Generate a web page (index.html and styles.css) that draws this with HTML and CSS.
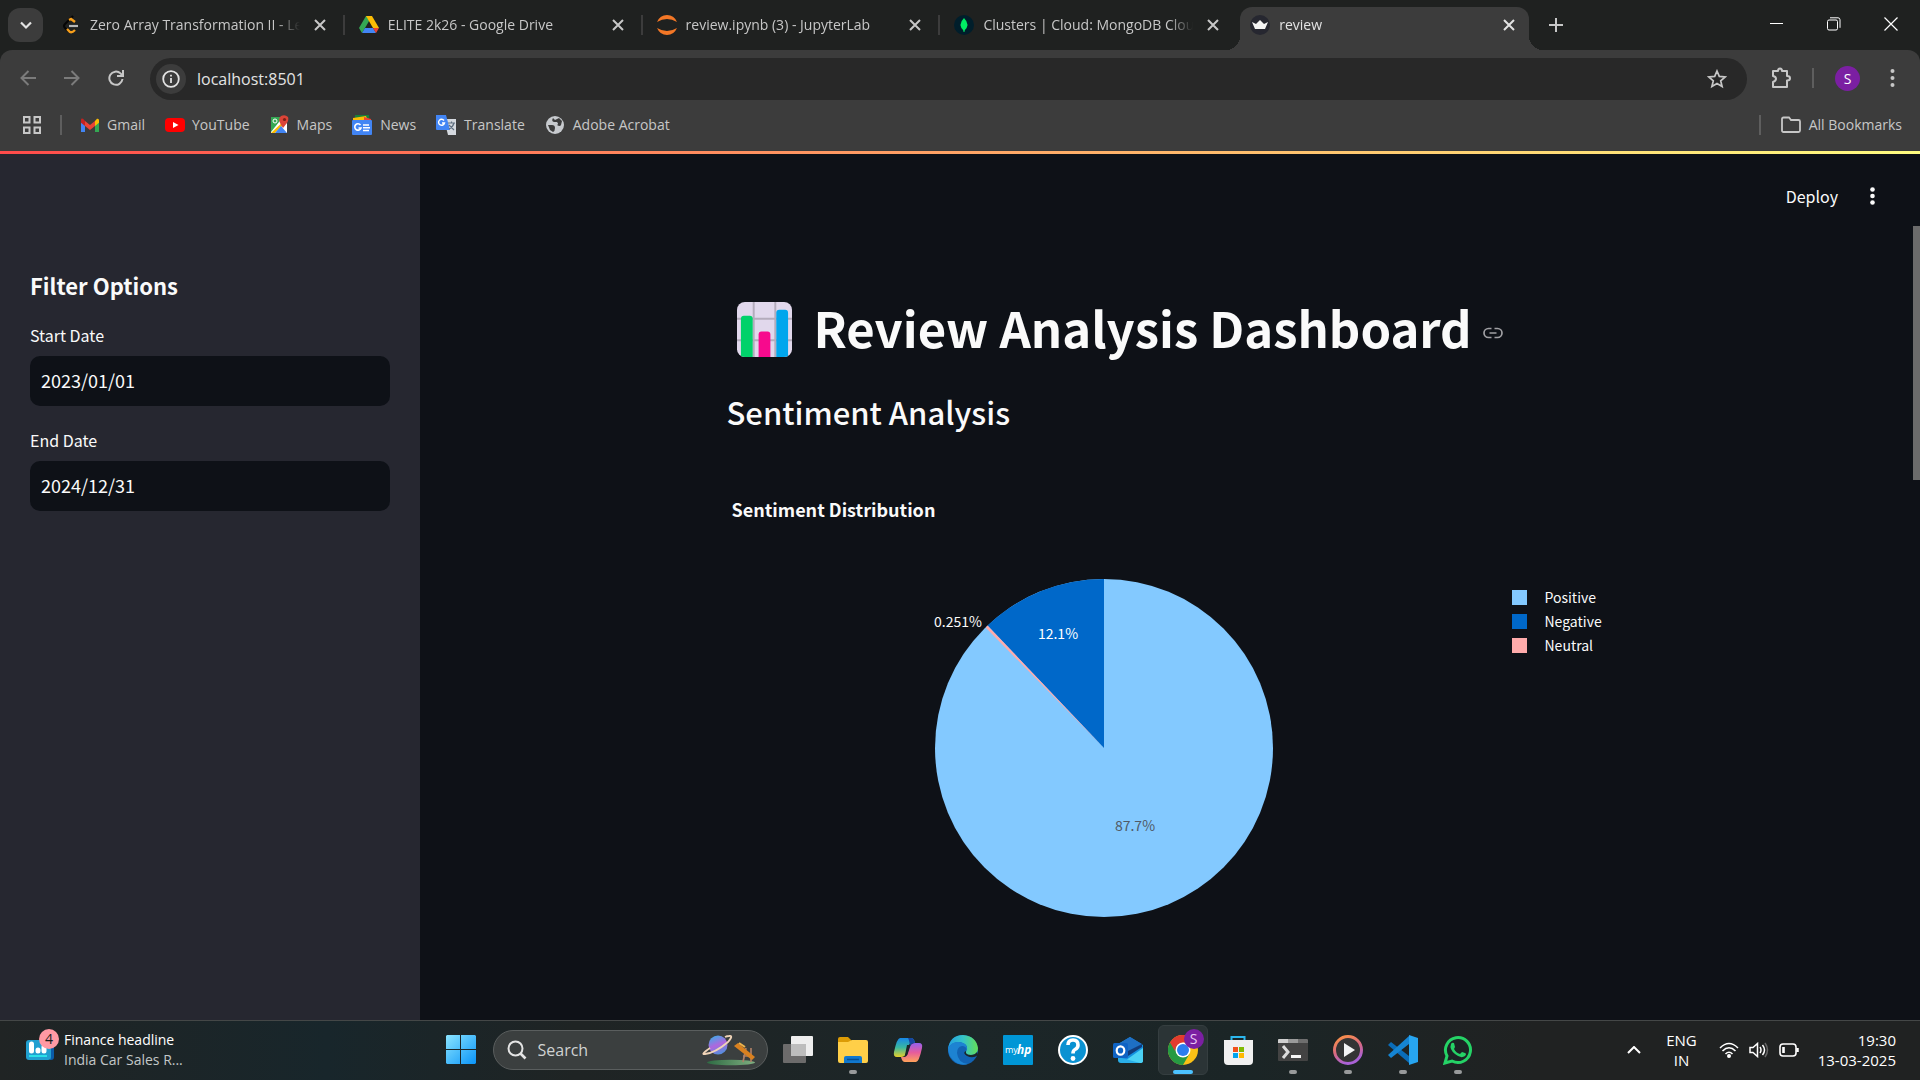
FILE: index.html
```html
<!DOCTYPE html>
<html lang="en">
<head>
<meta charset="utf-8">
<title>review</title>
<link rel="stylesheet" href="styles.css">
</head>
<body>
<header class="browser">
  <div class="tabstrip">
    <button class="tab-search" aria-label="Search tabs"><svg width="16" height="16" viewBox="0 0 16 16"><path d="M3 5.500l5 5 5-5" fill="none" stroke="currentColor" stroke-width="2.200"/></svg></button>
    <nav class="tabs" aria-label="Tabs">
      <div class="tab">
        <svg class="favicon" viewBox="0 0 20 20"><path d="M12 1L4 9q-2 2 0 4l3 3" fill="none" stroke="#050505" stroke-width="2"/><path d="M8 5l2-1 4 3M6 14l3 3q2 1 5-2" fill="none" stroke="#f79f1b" stroke-width="2.400"/><path d="M8 11h9" stroke="#b8b8b8" stroke-width="2.200"/></svg>
        <a class="tab-title" href="#">Zero Array Transformation II - Lee</a>
        <button class="tab-close" aria-label="Close tab"><svg width="12" height="12" viewBox="0 0 12 12"><path d="M1 1l10 10M11 1L1 11" stroke="currentColor" stroke-width="2"/></svg></button>
      </div>
      <div class="tab">
        <svg class="favicon" viewBox="0 0 20 20"><path d="M7 1h6l-7 12-3 5-3-5z" fill="#34a853"/><path d="M7 1h6l7 12h-6z" fill="#fbbc04"/><path d="M6 13h8l3 5H3z" fill="#4285f4"/><path d="M14 13h6l-3 5z" fill="#ea4335"/></svg>
        <a class="tab-title" href="#">ELITE 2k26 - Google Drive</a>
        <button class="tab-close" aria-label="Close tab"><svg width="12" height="12" viewBox="0 0 12 12"><path d="M1 1l10 10M11 1L1 11" stroke="currentColor" stroke-width="2"/></svg></button>
      </div>
      <div class="tab">
        <svg class="favicon" viewBox="0 0 20 20"><path d="M0 7Q3 0 10 0t10 7Q10 1 0 7zM0 13q3 7 10 7t10-7Q10 19 0 13z" fill="#f37726"/></svg>
        <a class="tab-title" href="#">review.ipynb (3) - JupyterLab</a>
        <button class="tab-close" aria-label="Close tab"><svg width="12" height="12" viewBox="0 0 12 12"><path d="M1 1l10 10M11 1L1 11" stroke="currentColor" stroke-width="2"/></svg></button>
      </div>
      <div class="tab">
        <svg class="favicon" viewBox="0 0 20 20"><circle cx="10" cy="10" r="10" fill="#001e2b"/><path d="M10 3q7 7 0 13-7-6 0-13z" fill="#00ed64"/><path d="M10 13v4" stroke="#00ed64"/></svg>
        <a class="tab-title" href="#">Clusters | Cloud: MongoDB Cloud</a>
        <button class="tab-close" aria-label="Close tab"><svg width="12" height="12" viewBox="0 0 12 12"><path d="M1 1l10 10M11 1L1 11" stroke="currentColor" stroke-width="2"/></svg></button>
      </div>
      <div class="tab active">
        <svg class="favicon" viewBox="0 0 20 20"><circle cx="10" cy="10" r="10" fill="#262730"/><path d="M2 7l4 2 4-4 4 4 4-2-3 7H5z" fill="#f4f4f4"/></svg>
        <a class="tab-title" href="#">review</a>
        <button class="tab-close" aria-label="Close tab"><svg width="12" height="12" viewBox="0 0 12 12"><path d="M1 1l10 10M11 1L1 11" stroke="currentColor" stroke-width="2"/></svg></button>
      </div>
    </nav>
    <button class="new-tab" aria-label="New tab"><svg width="14" height="14" viewBox="0 0 14 14"><path d="M7 0v14M0 7h14" stroke="currentColor" stroke-width="2"/></svg></button>
    <div class="window-controls">
      <button aria-label="Minimize"><svg width="14" height="14" viewBox="0 0 14 14"><path d="M0 6.500h13" stroke="#fff"/></svg></button>
      <button aria-label="Restore"><svg width="14" height="14" viewBox="0 0 14 14" fill="none" stroke="#fff"><rect x=".5" y="3" width="10" height="10" rx="1.500"/><path d="M3 .8h8q2 0 2 2v8"/></svg></button>
      <button aria-label="Close"><svg width="14" height="14" viewBox="0 0 14 14"><path d="M.5.5l13 13M13.500.5l-13 13" stroke="#fff" stroke-width="1.200"/></svg></button>
    </div>
  </div>
  <div class="toolbar">
    <button class="tool dim" aria-label="Back"><svg width="16" height="16" viewBox="0 0 16 16" fill="none" stroke="currentColor" stroke-width="2"><path d="M16 8H2M8.500 1L1.500 8l7 7"/></svg></button>
    <button class="tool dim" aria-label="Forward"><svg width="16" height="16" viewBox="0 0 16 16" fill="none" stroke="currentColor" stroke-width="2"><path d="M0 8h14M7.500 1l7 7-7 7"/></svg></button>
    <button class="tool" aria-label="Reload"><svg width="16" height="16" viewBox="0 0 16 16" fill="none" stroke="currentColor" stroke-width="2"><path d="M14.500 9A6.600 6.600 0 1 1 12.500 3.400L15 6"/><path d="M15 0v6H9"/></svg></button>
    <div class="omnibox">
      <button class="site-info" aria-label="Site information"><svg width="18" height="18" viewBox="0 0 18 18" fill="none" stroke="currentColor" stroke-width="1.800"><circle cx="9" cy="9" r="7.800"/><path d="M9 8v5M9 4.800v1.800"/></svg></button>
      <input class="url" type="text" aria-label="Address" value="localhost:8501">
      <button class="star" aria-label="Bookmark this tab"><svg width="20" height="20" viewBox="0 0 20 20"><path d="M10 2l2.300 5.400 5.900.5-4.500 3.900 1.400 5.700-5.100-3-5.100 3 1.400-5.700L1.800 7.900l5.900-.5z" fill="none" stroke="currentColor" stroke-width="1.700"/></svg></button>
    </div>
    <button class="tool ext" aria-label="Extensions"><svg width="22" height="22" viewBox="0 0 22 22"><path d="M3 4h5q0-2.500 2-2.500T12 4h5v5q3 0 3 2.200T17 13.500V20H3v-5q3-1 3-3.200T3 9z" fill="none" stroke="currentColor" stroke-width="2" stroke-linejoin="round"/></svg></button>
    <span class="divider"></span>
    <button class="avatar" aria-label="Profile">S</button>
    <button class="tool menu" aria-label="Browser menu"><svg width="5" height="18" viewBox="0 0 5 18" fill="currentColor"><circle cx="2.500" cy="2" r="2"/><circle cx="2.500" cy="9" r="2"/><circle cx="2.500" cy="16" r="2"/></svg></button>
  </div>
  <nav class="bookmarks" aria-label="Bookmarks">
    <button class="apps" aria-label="Apps"><svg width="18" height="18" viewBox="0 0 18 18" fill="none" stroke="currentColor" stroke-width="2"><path d="M1 1h5.500v5.500H1zM11.500 1H17v5.500h-5.500zM1 11.500h5.500V17H1zM11.500 11.500H17V17h-5.500z"/></svg></button>
    <span class="divider"></span>
    <a href="#"><svg viewBox="0 0 20 20"><path d="M1 5v12h4V9z" fill="#4285f4"/><path d="M15 9v8h4V5z" fill="#34a853"/><path d="M1 4.500v3.200L5 11V6l5 4 5-4v5l-5 4-9-7.300z" fill="#ea4335"/><path d="M15 6l2-2.200q2-.5 2 1.500v2.500L15 11z" fill="#fbbc04"/><path d="M1 7.800V5q0-2 2-1.200L5 6v5z" fill="#c5221f"/></svg>Gmail</a>
    <a href="#"><svg viewBox="0 0 20 20"><rect y="3" width="20" height="14" rx="4" fill="#f00"/><path d="M8 7l5.500 3L8 13z" fill="#fff"/></svg>YouTube</a>
    <a href="#"><svg viewBox="0 0 20 20"><path d="M1 2h16v16H1z" fill="#fff"/><path d="M1 2h12L1 17z" fill="#34a853"/><path d="M1 18L17 3v3L5 18z" fill="#fbbc04"/><path d="M5 18l6-7 6 7z" fill="#4285f4"/><path d="M13 13q-2-3-3-5-2-5 1-7 4-2 7 1 1 3-1 6z" fill="#db4437"/><circle cx="14.500" cy="4.500" r="1.600" fill="#7c2017"/><circle cx="5" cy="6" r="2" fill="none" stroke="#fff"/></svg>Maps</a>
    <a href="#"><svg viewBox="0 0 20 20"><path d="M3 0h14v6H3z" fill="#188038"/><path d="M1 3l13-2 2 5H1z" fill="#fbbc04"/><path d="M12 2l7 2v3h-7z" fill="#ea4335"/><rect y="5" width="20" height="15" rx="1" fill="#4285f4"/><path d="M8.500 10A3.200 3.200 0 1 0 9 13H6.500M11 10h6M11 12.800h7M11 15.500h6" fill="none" stroke="#fff" stroke-width="1.600"/></svg>News</a>
    <a href="#"><svg viewBox="0 0 20 20"><path d="M8 4h12v16h-8z" fill="#d5d9df"/><path d="M0 0h10l4 15H1q-1 0-1-1z" fill="#4285f4"/><path d="M8 5.500A3 3 0 1 0 8.500 8H6" fill="none" stroke="#fff" stroke-width="1.400"/><path d="M12 8h7M15.500 6.500V8M18 8q-1 4-5 6M13 10l5 5" fill="none" stroke="#607080" stroke-width="1.200"/></svg>Translate</a>
    <a href="#"><svg viewBox="0 0 20 20"><circle cx="10" cy="10" r="9" fill="#c7cace"/><path d="M3 10h4q3 0 3 3t-2 4l-3-2zM8 3q-2 3 1 4h3q2 2 0 3 3 2 4 0l1-4-3-3-4 2z" fill="#3c3c3c"/></svg>Adobe Acrobat</a>
    <span class="divider push"></span>
    <a class="all" href="#"><svg viewBox="0 0 20 20"><path d="M1 4q0-1.500 1.500-1.500H8l2 2.500h7.500Q19 5 19 6.500v9q0 1.500-1.500 1.500h-15Q1 17 1 15.500z" fill="none" stroke="currentColor" stroke-width="1.800"/></svg>All Bookmarks</a>
  </nav>
</header>

<div class="app">
  <div class="decoration"></div>
  <aside class="sidebar">
    <h2>Filter Options</h2>
    <label for="start">Start Date</label>
    <input id="start" type="text" value="2023/01/01">
    <label for="end">End Date</label>
    <input id="end" type="text" value="2024/12/31">
  </aside>
  <main class="main">
    <div class="app-header">
      <button class="deploy">Deploy</button>
      <button class="deploy" aria-label="Main menu"><svg width="5" height="18" viewBox="0 0 5 18" fill="currentColor"><circle cx="2.500" cy="2.500" r="2.300"/><circle cx="2.500" cy="9" r="2.300"/><circle cx="2.500" cy="15.500" r="2.300"/></svg></button>
    </div>
    <div class="scroller">
      <div class="content">
        <h1>
          <svg class="emoji" viewBox="0 0 56 56" role="img" aria-label="Bar chart"><defs><clipPath id="card"><rect width="56" height="56" rx="8"/></clipPath></defs><g clip-path="url(#card)"><path fill="#e1d8ec" d="M0 0h56v56H0z"/><path d="M17 0v56M39 0v56M0 17h56M0 39h56" stroke="#b4acbc" stroke-width="2"/><path d="M4 56V17q0-3 3-3h6q3 0 3 3v39z" fill="#00d26a"/><path d="M22 56V33q0-3 3-3h6q3 0 3 3v23z" fill="#f70a8d"/><path d="M40 56V11q0-3 3-3h6q3 0 3 3v45z" fill="#00a6ed"/></g></svg>
          Review Analysis Dashboard
          <a class="anchor" href="#" aria-label="Link to heading"><svg width="20" height="20" viewBox="0 0 20 20" fill="none" stroke="currentColor" stroke-width="1.700"><path d="M8.500 5.500h-3a4.500 4.500 0 0 0 0 9h3M11.500 5.500h3a4.500 4.500 0 0 1 0 9h-3M6.500 10h7"/></svg></a>
        </h1>
        <h3>Sentiment Analysis</h3>
        <h4>Sentiment Distribution</h4>
        <div class="chart">
          <svg class="pie" viewBox="0 0 785 376" role="img" aria-label="Sentiment distribution pie">
            <circle cx="377" cy="188" r="169" fill="#83c9ff"/>
            <path d="M377 188L260.500 65.500A169 169 0 0 1 377 19z" fill="#0068c9"/>
            <path d="M377 188L258.600 67.400 260.500 65.500z" fill="#ffabab"/>
            <text x="408" y="271" fill="#505a66">87.7%</text>
            <text x="331" y="79" fill="#fff">12.1%</text>
            <text x="231" y="67" fill="#fafafa">0.251%</text>
          </svg>
          <ul class="legend">
            <li class="positive">Positive</li>
            <li class="negative">Negative</li>
            <li class="neutral">Neutral</li>
          </ul>
        </div>
      </div>
      <div class="scrollbar"><div class="thumb"></div></div>
    </div>
  </main>
</div>

<footer class="taskbar">
  <button class="widgets">
    <span class="widget-icon"><svg width="28" height="20" viewBox="0 0 28 20"><path d="M24 0h1q3 0 3 3v14q0 3-3 3h-1z" fill="#0a5ba8"/><rect width="25" height="20" rx="3" fill="#219fd0"/><path d="M5.500 4v7M12 10v1M18 7v4" stroke="#fff" stroke-width="5" stroke-linecap="round"/><path d="M3 16h18" stroke="#2be0e8" stroke-width="2"/></svg><span class="badge">4</span></span>
    <span class="headline"><b>Finance headline</b><span>India Car Sales R...</span></span>
  </button>
  <div class="dock">
    <button class="start" aria-label="Start"><svg width="30" height="30" viewBox="0 0 30 30"><defs><linearGradient id="win" x2="1" y2="1"><stop stop-color="#8be5ff"/><stop offset="1" stop-color="#0a94f8"/></linearGradient></defs><path d="M1 0h13v14H0V1zM15 0h14l1 1v13H15zM0 15h14v14H1l-1-1zM15 15h15v13l-1 1H15z" fill="url(#win)"/></svg></button>
    <label class="search">
      <svg width="20" height="20" viewBox="0 0 20 20" fill="none" stroke="#e4e4e4" stroke-width="2"><circle cx="8.500" cy="8.500" r="7"/><path d="M13.500 13.500l5 5" stroke-width="2.600"/></svg>
      <input type="text" aria-label="Search" placeholder="Search">
      <svg width="54" height="32" viewBox="0 0 54 32"><defs><linearGradient id="pl" x1="0" y1="0" x2=".4" y2="1"><stop stop-color="#2cb5e8"/><stop offset=".6" stop-color="#b066dd"/><stop offset="1" stop-color="#5b8bdc"/></linearGradient><linearGradient id="gr"><stop stop-color="#2e6b43"/><stop offset="1" stop-color="#7fae80"/></linearGradient></defs><ellipse cx="29" cy="28.500" rx="24" ry="2.800" fill="url(#gr)"/><circle cx="16" cy="11" r="9.500" fill="url(#pl)"/><path d="M8 14Q-2 21 3 20q10-1 23-12 6-7 1-6-2 0-4 1" fill="none" stroke="#f0d4b8" stroke-width="1.800"/><path d="M41 28l3-14M49 28V14M41 22h9" stroke="#ad7f66" stroke-width="1.700"/><path d="M32 12l4-3 17 14-3 3z" fill="#d98120"/><path d="M37 9l6 4" stroke="#edb34c" stroke-width="2"/></svg>
    </label>
    <button aria-label="Task view"><svg viewBox="0 0 30 30"><rect y="9" width="23" height="19" rx="1" fill="#6c6b6b"/><rect x="8" y="1" width="22" height="20" rx="1" fill="#eee"/><path d="M8 9h15v12H8z" fill="#bdbdbd"/></svg></button>
    <button class="open" aria-label="File Explorer"><svg viewBox="0 0 30 30"><path d="M0 4q0-2 2-2h8l4 4h14v4H0z" fill="#dc9b05"/><path d="M0 7h10l4-2h14q2 0 2 2v19q0 2-2 2H2q-2 0-2-2z" fill="#ffcf48"/><path d="M6 28v-5q0-2 2-2h14q2 0 2 2v5z" fill="#1178ce"/><path d="M9 24.500h12" stroke="#064e91" stroke-width="1.500"/></svg></button>
    <button aria-label="Copilot"><svg viewBox="0 0 30 30"><defs><linearGradient id="ca" x2="0" y2="1"><stop stop-color="#1787e8"/><stop offset=".5" stop-color="#3ab8a0"/><stop offset="1" stop-color="#e8d028"/></linearGradient><linearGradient id="cb" x2="0" y2="1"><stop stop-color="#9660ee"/><stop offset=".5" stop-color="#e65c9c"/><stop offset="1" stop-color="#ffa25a"/></linearGradient></defs><path d="M7 3h11q3 0 4 5h-3q-3 0-4 4l-2 6q-1 4-5 4H4q-4 0-3-5Q4 3 7 3z" fill="url(#ca)"/><path d="M23 27H12q-3 0-4-5h3q3 0 4-4l2-6q1-4 5-4h4q4 0 3 5-3 14-6 14z" fill="url(#cb)"/><path d="M15 3h3q3 0 4 5-4 0-5 3-1-7-2-8z" fill="#1746a0"/><path d="M14 10h3l-3 10h-2z" fill="#1c2628"/></svg></button>
    <button aria-label="Edge"><svg viewBox="0 0 30 30"><defs><linearGradient id="ea"><stop stop-color="#249fe0"/><stop offset=".5" stop-color="#35c4c8"/><stop offset="1" stop-color="#64df55"/></linearGradient></defs><circle cx="15" cy="15" r="15" fill="#1263b3"/><path d="M0 14Q2 0 15 0q13 1 15 13 0 7-7 7-6 0-5-3 4-8-7-10Q3 7 0 14z" fill="url(#ea)"/><path d="M0 13q4-7 11-6 9 1 8 8-1-4-5-4-5 1-5 7 1 10 11 11-9 2-15-4-5-5-5-12z" fill="#1d83d2"/><path d="M18 16q-1 4 5 4 4 0 6-3l1 3q-5 4-11 1-5-3-1-5z" fill="#1c2628"/></svg></button>
    <button aria-label="myHP"><svg viewBox="0 0 30 30"><rect width="30" height="30" rx="1" fill="#0096d6"/><text x="2" y="18" class="hp-my">my</text><text x="14" y="19" class="hp-logo">hp</text></svg></button>
    <button aria-label="Help"><svg viewBox="0 0 30 30"><circle cx="15" cy="15" r="14" fill="#0a92d2" stroke="#fff" stroke-width="2"/><path d="M10 10q0-5 5-5t5 5q0 3-3 4.500-2 1-2 4" fill="none" stroke="#fff" stroke-width="3.600"/><circle cx="15" cy="23.500" r="2.400" fill="#fff"/></svg></button>
    <button aria-label="Outlook"><svg viewBox="0 0 30 30"><path d="M5 9l12-7 13 8v15q0 3-3 3H8z" fill="#1490df"/><path d="M7 8l10-6 12 7-14 8z" fill="#1e6fc4"/><path d="M13 17L29 9v3L15 21z" fill="#123b7a"/><path d="M30 13v13q0 2-3 2H9z" fill="#4bd1f4"/><path d="M5 22l22 6H8q-3 0-3-3z" fill="#2aaee8"/><rect y="8" width="15" height="15" rx="1.500" fill="#0f63c4"/><ellipse cx="7.500" cy="15.500" rx="3.800" ry="4.200" fill="none" stroke="#fff" stroke-width="2.200"/></svg></button>
    <button class="current" aria-label="Chrome"><svg viewBox="0 0 30 30"><circle cx="15" cy="15" r="15" fill="#fbc116"/><path d="M2 7.500A15 15 0 0 0 15 30l6.500-11.200L15 15z" fill="#269a43"/><path d="M2 7.500l6.500 11.300L15 15z" fill="#269a43"/><path d="M2 7.500A15 15 0 0 1 28 7.500H15L8 12l-1 4z" fill="#e33b2e"/><circle cx="15" cy="15" r="7.500" fill="#fff"/><circle cx="15" cy="15" r="6" fill="#2a7df0"/></svg><span class="badge profile">S</span></button>
    <button aria-label="Microsoft Store"><svg viewBox="0 0 30 30"><path d="M8.500 7V2h13v5" fill="none" stroke="#2bb7ee" stroke-width="2"/><path d="M1 5h29v21q0 4-4 4H5q-4 0-4-4z" fill="#f0f0f0"/><path d="M10 12h5v5h-5z" fill="#f1511b"/><path d="M16 12h5v5h-5z" fill="#80bb03"/><path d="M10 18h5v5h-5z" fill="#00a3ee"/><path d="M16 18h5v5h-5z" fill="#ffb901"/></svg></button>
    <button class="open" aria-label="Terminal"><svg viewBox="0 0 30 30"><rect y="4" width="30" height="22" rx="1" fill="#434343"/><path d="M0 8V5q0-1 1-1h9v4z" fill="#cfcfcf"/><path d="M10 4h10v4H10z" fill="#9a9a9a"/><path d="M20 4h9l1 1v3H20z" fill="#6e6e6e"/><path d="M5 11l5 6-5 6" fill="none" stroke="#ddd" stroke-width="3"/><path d="M13 21.500h10" stroke="#f5f5f5" stroke-width="3"/></svg></button>
    <button class="open" aria-label="Media Player"><svg viewBox="0 0 30 30"><defs><linearGradient id="mp" x2=".4" y2="1"><stop stop-color="#ff9540"/><stop offset=".55" stop-color="#d96a80"/><stop offset="1" stop-color="#a961d6"/></linearGradient></defs><circle cx="15" cy="15" r="13.500" fill="#343434" stroke="url(#mp)" stroke-width="3"/><path d="M11 8l11 7-11 7z" fill="#f4f4f4"/></svg></button>
    <button class="open" aria-label="Visual Studio Code"><svg viewBox="0 0 30 30"><path d="M3 7L0 10l21 18v-7z" fill="#0a6cb8"/><path d="M3 23l-3-3L21 1v8z" fill="#1585d3"/><path d="M21 0l9 3v24l-9 3z" fill="#27a5f0"/></svg></button>
    <button class="open" aria-label="WhatsApp"><svg viewBox="0 0 30 30"><path d="M2 28l2-7a12.500 12.500 0 1 1 5 5z" fill="#1c2424" stroke="#25d366" stroke-width="3"/><path d="M11 8q-2-1-3 1-2 5 4 10t10 2q2-2 0-3l-3-1-2 2q-4-1-6-5l1-2z" fill="#25d366"/></svg></button>
  </div>
  <div class="tray">
    <button aria-label="Hidden icons"><svg width="14" height="8" viewBox="0 0 14 8"><path d="M1 7l6-6 6 6" fill="none" stroke="#fff" stroke-width="2"/></svg></button>
    <button class="lang">ENG<br>IN</button>
    <button class="status" aria-label="Network, volume and battery">
      <svg width="20" height="16" viewBox="0 0 20 16" fill="none" stroke="#fff" stroke-width="1.600"><path d="M1 6q9-9 18 0M3.500 9q6.500-6.500 13 0M6.500 12q3.500-3.500 7 0"/><circle cx="10" cy="14" r="1.200" fill="#fff"/></svg>
      <svg width="20" height="16" viewBox="0 0 20 16" fill="none" stroke="#fff" stroke-width="1.500"><path d="M1 5.500h3L8.500 1.500v13L4 10.500H1zM11 5q2 3 0 6M13.500 3q4 5 0 10"/><path d="M16 1q5 7 0 14" stroke="#666"/></svg>
      <svg width="20" height="14" viewBox="0 0 20 14" fill="none" stroke="#fff" stroke-width="1.600"><rect x="1" y="1" width="16" height="12" rx="3"/><path d="M18.500 5v4" stroke-width="2.500"/><path d="M4.500 4v6" stroke-width="2.600"/></svg>
    </button>
    <button class="clock">19:30<br>13-03-2025</button>
  </div>
</footer>
</body>
</html>
```

FILE: styles.css
```css
* { box-sizing: border-box; }

body {
  margin: 0;
  height: 100vh;
  display: flex;
  flex-direction: column;
  overflow: hidden;
  background: #0e1117;
  color: #fafafa;
  font-family: "Open Sans", "Noto Sans", sans-serif;
}

button, input { font: inherit; color: inherit; border: 0; background: none; padding: 0; margin: 0; outline: none; }
button { display: flex; align-items: center; justify-content: center; }
a { color: inherit; text-decoration: none; }
svg { display: block; flex: none; }

/* Browser frame */
.browser { background: #1f2120; color: #c7c7c7; font-size: 14px; }
.tabstrip { height: 50px; display: flex; align-items: center; padding-left: 8px; }
.tab-search { width: 35px; height: 34px; border-radius: 12px; background: #3c3c3c; color: #e3e3e3; }
.tabs { display: flex; flex: 0 1 1486px; align-self: stretch; margin-left: 4px; min-width: 0; }
.tab { flex: 1 1 0; min-width: 0; display: flex; align-items: center; padding: 0 15px 0 14px; position: relative; }
.tab::after { content: ""; position: absolute; right: 0; top: 15px; width: 2px; height: 20px; background: #3c3c3c; }
.tab:nth-child(4)::after { display: none; }
.favicon { width: 20px; height: 20px; }
.tab-title { flex: 1; margin-left: 9px; white-space: nowrap; overflow: hidden; line-height: 24px; -webkit-mask-image: linear-gradient(90deg, #000 calc(100% - 24px), transparent); mask-image: linear-gradient(90deg, #000 calc(100% - 24px), transparent); }
.tab-close { width: 20px; height: 20px; margin-left: 10px; }
.tab.active { margin: 7px 4px 0 2px; padding: 0 10px 7px; background: #3c3c3c; border-radius: 12px 12px 0 0; color: #e3e3e3; }
.tab.active::before, .tab.active::after { content: ""; position: absolute; top: auto; bottom: 0; width: 14px; height: 14px; }
.tab.active::before { left: -14px; background: radial-gradient(circle at 0 0, transparent 14px, #3c3c3c 14px); }
.tab.active::after { right: -14px; background: radial-gradient(circle at 100% 0, transparent 14px, #3c3c3c 14px); }
.new-tab { width: 26px; height: 26px; margin-left: 10px; }
.window-controls { display: flex; align-self: stretch; margin-left: auto; padding-right: 1px; }
.window-controls button { width: 57px; height: 48px; }

.toolbar { height: 56px; display: flex; align-items: center; background: #3c3c3c; border-radius: 12px 12px 0 0; padding: 0 6px; }
.tool { width: 44px; height: 44px; color: #c7c7c7; }
.tool.dim { color: #7b7b7b; }
.omnibox { flex: 1; height: 42px; margin: 2px 0 0 12px; border-radius: 21px; background: #282828; display: flex; align-items: center; padding: 0 20px 0 6px; }
.site-info { width: 30px; height: 30px; border-radius: 15px; background: #3c3c3c; color: #e3e3e3; }
.url { flex: 1; min-width: 0; margin-left: 11px; font-size: 16px; color: #e3e3e3; }
.ext { margin-left: 12px; }
.divider { width: 2px; height: 20px; background: #5e5e5e; }
.toolbar .divider { margin-left: 9px; }
.avatar { width: 25px; height: 25px; border-radius: 50%; background: #7b1fa2; color: #fff; font-size: 14px; margin-left: 21px; }
.tool.menu { margin-left: 10px; }

.bookmarks { height: 45px; display: flex; align-items: center; background: #3c3c3c; padding: 0 18px 8px 23px; }
.bookmarks a { display: flex; align-items: center; gap: 7px; margin-left: 20px; }
.bookmarks a:nth-of-type(1) { margin-left: 18px; }
.bookmarks a:nth-of-type(n+4) { gap: 8px; }
.bookmarks a svg { width: 20px; height: 20px; }
.bookmarks .divider { margin-left: 19px; }
.bookmarks .push { margin-left: auto; }

/* Dashboard */
.app { flex: 1; min-height: 0; display: flex; position: relative; font-family: "Noto Sans CJK SC", "Noto Sans", sans-serif; }
.decoration { position: absolute; top: 0; left: 0; right: 0; height: 3px; background: linear-gradient(90deg, #ff4b4b, #fffd80); }
.sidebar { width: 420px; flex: none; padding: 118px 30px 0; background: #262730; }
.sidebar h2 { margin: 0; font-size: 22px; line-height: 32px; font-weight: 700; }
.sidebar label { display: block; margin: 22px 0 9px; font-size: 16px; line-height: 24px; }
.sidebar input { display: block; width: 100%; height: 50px; padding: 0 11px 2px; border-radius: 10px; background: #0e1117; font-size: 18px; }
.main { flex: 1; min-width: 0; display: flex; flex-direction: column; }
.app-header { height: 75px; flex: none; display: flex; justify-content: flex-end; align-items: center; gap: 32px; padding: 14px 45px 0 0; }
.deploy { font-size: 16px; line-height: 24px; }
.scroller { flex: 1; min-height: 0; display: flex; }
.content { flex: 0 1 880px; min-width: 0; margin: 0 auto; padding-top: 71px; }
.scrollbar { width: 7px; }
.thumb { height: 32%; background: #6b6b6b; }
h1, h3, h4 { margin: 0; white-space: nowrap; }
h1 { display: flex; align-items: center; font-size: 49px; line-height: 60px; font-weight: 700; }
.emoji { width: 55px; height: 55px; margin: 4px 22px 0 10px; }
.anchor { margin: 12px 0 0 11px; color: #a0a0a4; }
h3 { margin-top: 34px; font-size: 31px; line-height: 42px; font-weight: 500; }
h4 { margin: 64px 0 0 5px; font-size: 18px; line-height: 24px; font-weight: 700; }
.chart { display: flex; margin-top: 39px; }
.pie { flex: 1 1 0; min-width: 0; height: 376px; font-size: 14px; text-anchor: middle; }
.legend { flex: none; width: 95px; list-style: none; margin: 0; padding: 25px 0 0; font-size: 14px; line-height: 24px; }
.legend li { display: flex; align-items: center; gap: 18px; }
.legend li::before { content: ""; width: 15px; height: 15px; }
.positive::before { background: #83c9ff; }
.negative::before { background: #0068c9; }
.neutral::before { background: #ffabab; }

/* Taskbar */
.taskbar { height: 60px; flex: none; display: grid; grid-template-columns: 1fr auto 1fr; align-items: center; padding: 0 2px 2px 0; border-top: 1px solid #444747; background: linear-gradient(90deg, #202424, #18262b 17%, #1f2424 30%, #1c2628 50%, #1b2526 65%, #202222 80%, #202222); color: #fff; font-size: 14px; line-height: 20px; }
.widgets { justify-self: start; margin-left: 26px; gap: 10px; text-align: left; }
.widget-icon { position: relative; }
.badge { position: absolute; left: 13px; top: -11px; width: 20px; height: 20px; border-radius: 50%; background: #ff99a4; color: #1b1b1b; font-size: 14px; line-height: 20px; text-align: center; }
.headline { display: flex; flex-direction: column; }
.headline b { font-weight: 400; }
.headline span { color: #c3c7c7; }
.dock { display: flex; align-items: center; gap: 5px; }
.dock button { width: 50px; height: 50px; border-radius: 6px; position: relative; }
.dock button svg { width: 30px; height: 30px; }
.dock .start { margin-right: 2px; }
.search { width: 275px; height: 40px; display: flex; align-items: center; gap: 11px; padding: 0 11px 0 13px; border: 1px solid #5a5e5e; border-radius: 20px; background: #3b3f3f; }
.search input { flex: 1; min-width: 0; font-size: 16px; }
.search input::placeholder { color: #d0d2d2; opacity: 1; }
.open::after, .current::after { content: ""; position: absolute; left: 21px; bottom: 1px; width: 8px; height: 4px; border-radius: 2px; background: #989a9b; }
.current { background: #2b3436; border: 1px solid #353e40; }
.current::after { left: 14px; bottom: 0; width: 20px; background: #4cc2ff; }
.dock .profile { left: 25px; top: 3px; background: #7b1fa2; color: #e8c8f4; }
.hp-my { fill: #fff; font: 9px "Open Sans", sans-serif; }
.hp-logo { fill: #fff; font: italic 700 12px "Open Sans", sans-serif; }
.tray { justify-self: end; display: flex; align-items: center; margin-right: 22px; font-size: 15px; }
.lang { margin-left: 25px; }
.status { gap: 10px; margin-left: 22px; }
.clock { margin-left: 19px; text-align: right; }
```
